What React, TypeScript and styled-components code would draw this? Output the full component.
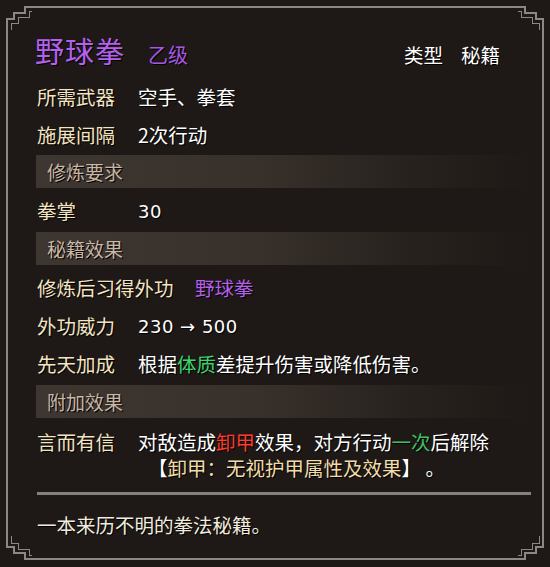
import React from "react";
import styled, { createGlobalStyle } from "styled-components";

const Global = createGlobalStyle`
  html, body { margin: 0; padding: 0; background: #221d1a; }
  body { font-family: "Noto Sans CJK SC", "Noto Sans", sans-serif; }
`;

const FONT = `"Noto Sans CJK SC", "Noto Sans", sans-serif`;

const Root = styled.div`
  position: relative;
  width: 550px;
  height: 567px;
  overflow: hidden;
  background: #1e1916;
  font-family: ${FONT};
  text-shadow: 1px 1px 0 #000;
`;

const FrameLayer = styled.svg`
  position: absolute;
  left: 0;
  top: 0;
  pointer-events: none;
`;

const Content = styled.div`
  display: flex;
  flex-direction: column;
  padding: 30px 19px 0 37px;
`;

const TitleRow = styled.div`
  display: flex;
  align-items: baseline;
  height: 40px;
  line-height: 40px;
  margin-left: -2px;
`;

const Title = styled.span`
  font-size: 29px;
  color: #b560ee;
  letter-spacing: 1px;
`;

const Grade = styled.span`
  font-size: 20px;
  color: #a856e4;
  margin-left: 23px;
`;

const TypeBox = styled.span`
  margin-left: auto;
  margin-right: 31px;
  display: flex;
  gap: 18px;
  font-size: 19.5px;
  color: #ffffff;
`;

const Row = styled.div<{ $mt?: number; $cols?: string }>`
  display: grid;
  grid-template-columns: ${(p) => p.$cols ?? "101px 1fr"};
  align-items: center;
  height: 38px;
  margin-top: ${(p) => p.$mt ?? 0}px;
  font-size: 19.5px;
  line-height: 26px;
`;

const TallRow = styled(Row)`
  height: auto;
  align-items: start;
`;

const Label = styled.span`
  color: #f4e4c2;
  white-space: nowrap;
`;

const Value = styled.span`
  color: #ffffff;
  white-space: nowrap;
`;

const Num = styled.span`
  font-family: "DejaVu Sans", sans-serif;
  font-size: 18px;
  letter-spacing: 0.5px;
`;

const Tint = styled.span<{ $c: string }>`
  color: ${(p) => p.$c};
`;

const Lines = styled.div`
  display: flex;
  flex-direction: column;
  color: #ffffff;
  white-space: nowrap;
`;

const Line = styled.span<{ $indent?: number }>`
  display: block;
  height: 26px;
  line-height: 26px;
  padding-left: ${(p) => p.$indent ?? 0}px;
`;

const SectionHeader = styled.div<{ $mt: number }>`
  height: 33px;
  margin-top: ${(p) => p.$mt}px;
  margin-left: -1px;
  padding-left: 11px;
  display: flex;
  align-items: center;
  font-size: 19px;
  color: #c9b6a4;
  background: linear-gradient(
    to right,
    #3d3631 0%,
    #37302b 45%,
    rgba(50, 43, 38, 0.5) 75%,
    rgba(40, 34, 30, 0) 100%
  );
`;

const Divider = styled.div`
  height: 3px;
  margin-top: 11px;
  background: #86817c;
`;

const Footer = styled.div`
  margin-top: 17px;
  line-height: 26px;
  font-size: 19.5px;
  color: #f2ebdf;
`;

const STROKE = "#8c8782";

function Frame() {
  const corner = (t: string, k: number) => (
    <g transform={t} key={k}>
      <path d="M7 30 L7 19 L14 19 L14 13 L25 13 L25 7 L32 7" />
      <path d="M11 30 L11 23 L18 23 L18 17 L29 17 L29 11 L32 11" strokeWidth={1} />
    </g>
  );
  return (
    <FrameLayer width={550} height={567} viewBox="0 0 550 567">
      <g fill="none" stroke={STROKE} strokeWidth={2} shapeRendering="crispEdges">
        <line x1={32} y1={7} x2={518} y2={7} />
        <line x1={32} y1={559} x2={518} y2={559} />
        <line x1={7} y1={30} x2={7} y2={537} />
        <line x1={543} y1={30} x2={543} y2={537} />
        {corner("", 0)}
        {corner("translate(550 0) scale(-1 1)", 1)}
        {corner("translate(0 566) scale(1 -1)", 2)}
        {corner("translate(550 566) scale(-1 -1)", 3)}
      </g>
    </FrameLayer>
  );
}

export default function App() {
  return (
    <Root>
      <Global />
      <Content>
        <TitleRow>
          <Title>野球拳</Title>
          <Grade>乙级</Grade>
          <TypeBox>
            <span>类型</span>
            <span>秘籍</span>
          </TypeBox>
        </TitleRow>

        <Row $mt={8}>
          <Label>所需武器</Label>
          <Value>空手、拳套</Value>
        </Row>
        <Row>
          <Label>施展间隔</Label>
          <Value>2次行动</Value>
        </Row>

        <SectionHeader $mt={1}>修炼要求</SectionHeader>
        <Row $mt={4}>
          <Label>拳掌</Label>
          <Value>
            <Num>30</Num>
          </Value>
        </Row>

        <SectionHeader $mt={2}>秘籍效果</SectionHeader>
        <Row $mt={4} $cols="158px 1fr">
          <Label>修炼后习得外功</Label>
          <Value>
            <Tint $c="#b45fe8">野球拳</Tint>
          </Value>
        </Row>
        <Row>
          <Label>外功威力</Label>
          <Value>
            <Num>230 → 500</Num>
          </Value>
        </Row>
        <Row>
          <Label>先天加成</Label>
          <Value>
            根据<Tint $c="#3ed36b">体质</Tint>差提升伤害或降低伤害。
          </Value>
        </Row>

        <SectionHeader $mt={2}>附加效果</SectionHeader>
        <TallRow $mt={11}>
          <Label>言而有信</Label>
          <Lines>
            <Line>
              对敌造成<Tint $c="#ff3a2e">卸甲</Tint>效果，对方行动
              <Tint $c="#3fbf62">一次</Tint>后解除
            </Line>
            <Line $indent={10}>
              【<Tint $c="#f1dda9">卸甲：无视护甲属性及效果</Tint>】 。
            </Line>
          </Lines>
        </TallRow>

        <Divider />
        <Footer>一本来历不明的拳法秘籍。</Footer>
      </Content>
      <Frame />
    </Root>
  );
}
